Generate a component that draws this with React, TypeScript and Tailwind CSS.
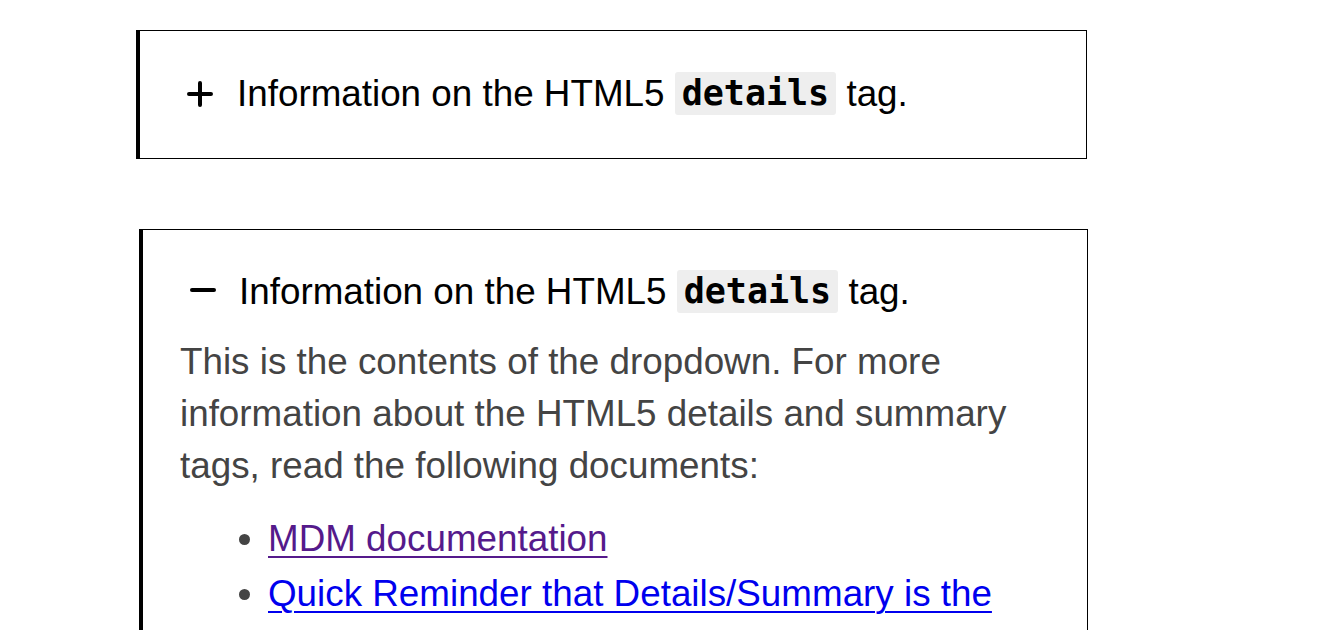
import React from "react";

function Code({ children }: { children: React.ReactNode }) {
  return (
    <code
      className="relative -top-[3px] inline-block rounded-[3px] bg-[#eeeeee] px-[7px] text-[35px] font-bold leading-[43px] text-black align-middle"
      style={{ fontFamily: '"DejaVu Sans Mono", "Liberation Mono", monospace' }}
    >
      {children}
    </code>
  );
}

function Plus() {
  return (
    <svg width="26" height="26" viewBox="0 0 26 26" className="shrink-0">
      <path d="M13 2 V24 M2 13 H24" stroke="black" strokeWidth="4" strokeLinecap="round" fill="none" />
    </svg>
  );
}

function Minus() {
  return (
    <svg width="26" height="26" viewBox="0 0 26 26" className="shrink-0">
      <path d="M2 11 H24" stroke="black" strokeWidth="4" strokeLinecap="round" fill="none" />
    </svg>
  );
}

export default function App() {
  return (
    <div
      className="min-h-[630px] w-[1317px] overflow-hidden bg-white pt-[30px]"
      style={{ fontFamily: '"Liberation Sans", Arial, sans-serif' }}
    >
      <div className="ml-[136px] w-[951px] border border-l-4 border-black px-[37px] pt-[37px] pb-[38px]">
        <div className="flex h-[52px] items-center pl-[10px] text-[36.8px] leading-[52px] text-black">
          <Plus />
          <span className="ml-[24px] whitespace-nowrap">
            Information on the HTML5 <Code>details</Code> tag.
          </span>
        </div>
      </div>

      <div className="ml-[139px] mt-[70px] w-[949px] border border-l-4 border-black px-[37px] pt-[36px] pb-[37px]">
        <div className="flex h-[52px] items-center pl-[10px] text-[36.8px] leading-[52px] text-black">
          <Minus />
          <span className="ml-[23px] whitespace-nowrap">
            Information on the HTML5 <Code>details</Code> tag.
          </span>
        </div>
        <p className="mt-[18px] text-[36.8px] leading-[52px] text-[#444444]">
          This is the contents of the dropdown. For more information about the HTML5 details and summary tags, read
          the following documents:
        </p>
        <ul className="mt-[21px] list-disc pl-[88px] text-[36.8px] leading-[52px] text-[#444444] marker:text-[#444444]">
          <li className="mb-[3px]">
            <a href="#mdm" className="text-[#551a8b] underline decoration-2 underline-offset-[5px]">
              MDM documentation
            </a>
          </li>
          <li className="mb-[3px]">
            <a href="#quick" className="text-[#0000ee] underline decoration-2 underline-offset-[5px]">
              Quick Reminder that Details/Summary is the Awesomest
            </a>
          </li>
        </ul>
      </div>
    </div>
  );
}
